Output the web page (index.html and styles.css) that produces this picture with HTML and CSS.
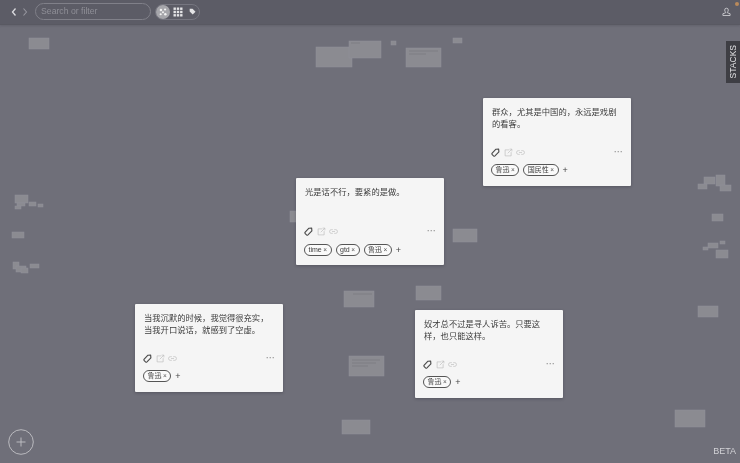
FILE: index.html
```html
<!DOCTYPE html>
<html lang="zh">
<head>
<meta charset="utf-8">
<title>Stacks</title>
<link rel="stylesheet" href="styles.css">
</head>
<body>
<svg width="0" height="0" class="defs">
  <defs>
    <symbol id="i-tag" viewBox="0 0 12 12"><path d="M6.600 1.600 10.200 1.500 10.500 5.200 5.300 10.600a1.400 1.400 0 0 1-1.900 0L1.600 8.700a1.400 1.400 0 0 1 0-1.900Z" fill="none" stroke="currentColor" stroke-width="1.500" stroke-linejoin="round"/></symbol>
    <symbol id="i-share" viewBox="0 0 12 12"><path d="M7 2.500H1.500V10.500H9.500V5.500M5 7 10.500 1.500M7.500 1.500H10.500V4.500" fill="none" stroke="currentColor" stroke-width=".9"/></symbol>
    <symbol id="i-link" viewBox="0 0 12 12"><path d="M5 3.500H3.200a2.500 2.500 0 0 0 0 5H5M7 3.500H8.800a2.500 2.500 0 0 1 0 5H7M4 6H8" fill="none" stroke="currentColor" stroke-width=".9"/></symbol>
  </defs>
</svg>
<header class="topbar">
  <div class="nav">
    <svg class="chev" viewBox="0 0 8 10"><path d="M5.500 1.500 2.500 5 5.500 8.500" fill="none" stroke="currentColor" stroke-width="1.300"/></svg>
    <svg class="chev chev-off" viewBox="0 0 8 10"><path d="M2.500 1.500 5.500 5 2.500 8.500" fill="none" stroke="currentColor" stroke-width="1.100"/></svg>
  </div>
  <div class="search">Search or filter</div>
  <div class="views">
    <span class="view view-on">
      <svg viewBox="0 0 12 12" class="view-icon"><g fill="#f2f2f2"><circle cx="3.500" cy="3.500" r="1.500"/><circle cx="8.500" cy="3" r="1.300"/><circle cx="6" cy="6.300" r="1.200"/><circle cx="3.200" cy="8.700" r="1.300"/><circle cx="8.800" cy="8.600" r="1.500"/></g></svg>
    </span>
    <span class="view">
      <svg viewBox="0 0 10 10" class="view-icon"><g fill="#e4e4e6"><rect x="0.500" y="0.500" width="2.400" height="2.400"/><rect x="3.800" y="0.500" width="2.400" height="2.400"/><rect x="7.100" y="0.500" width="2.400" height="2.400"/><rect x="0.500" y="3.800" width="2.400" height="2.400"/><rect x="3.800" y="3.800" width="2.400" height="2.400"/><rect x="7.100" y="3.800" width="2.400" height="2.400"/><rect x="0.500" y="7.100" width="2.400" height="2.400"/><rect x="3.800" y="7.100" width="2.400" height="2.400"/><rect x="7.100" y="7.100" width="2.400" height="2.400"/></g></svg>
    </span>
    <span class="view">
      <svg viewBox="0 0 10 10" class="view-icon view-icon-small"><path d="M1 1H5L9.300 5.300 5.300 9.300 1 5Z" fill="#e4e4e6"/></svg>
    </span>
  </div>
  <div class="account">
    <svg class="user" viewBox="0 0 10 10"><path d="M5 .8a2 2 0 0 1 2 2c0 1-.5 1.800-1 2.300v.8l3 1v2H1v-2l3-1v-.8c-.5-.5-1-1.300-1-2.300a2 2 0 0 1 2-2Z" fill="none" stroke="currentColor" stroke-width=".9"/></svg>
    <span class="notify"></span>
  </div>
</header>
<main class="canvas">
  <svg class="minimap" width="740" height="438" viewBox="0 25 740 438">
    <g class="mini">
      <rect x="29" y="38" width="20" height="11"/>
      <rect x="316" y="47" width="36" height="20"/>
      <rect x="349" y="41" width="32" height="17"/>
      <rect x="391" y="41" width="5" height="4"/>
      <rect x="406" y="48" width="35" height="19"/>
      <rect x="453" y="38" width="9" height="5"/>
      <rect x="15" y="195" width="13" height="8"/>
      <rect x="17" y="203" width="8" height="3"/>
      <rect x="15" y="206" width="6" height="3"/>
      <rect x="29" y="202" width="7" height="4"/>
      <rect x="38" y="204" width="5" height="3"/>
      <rect x="12" y="232" width="12" height="6"/>
      <rect x="13" y="262" width="6" height="7"/>
      <rect x="16" y="266" width="10" height="6"/>
      <rect x="21" y="268" width="7" height="5"/>
      <rect x="30" y="264" width="9" height="4"/>
      <rect x="704" y="177" width="11" height="7"/>
      <rect x="716" y="175" width="9" height="11"/>
      <rect x="720" y="185" width="11" height="6"/>
      <rect x="698" y="184" width="9" height="5"/>
      <rect x="712" y="214" width="11" height="7"/>
      <rect x="708" y="243" width="10" height="5"/>
      <rect x="703" y="247" width="5" height="3"/>
      <rect x="720" y="241" width="5" height="3"/>
      <rect x="716" y="250" width="12" height="8"/>
      <rect x="290" y="211" width="8" height="11"/>
      <rect x="453" y="229" width="24" height="13"/>
      <rect x="344" y="291" width="30" height="16"/>
      <rect x="416" y="286" width="25" height="14"/>
      <rect x="349" y="356" width="35" height="20"/>
      <rect x="342" y="420" width="28" height="14"/>
      <rect x="675" y="410" width="30" height="17"/>
      <rect x="698" y="306" width="20" height="11"/>
    </g>
    <g class="mini-lines">
      <path d="M353 294H372M352 360H380M352 363H376M352 366H368M409 51H438M409 54H426M351 43H360"/>
    </g>
  </svg>

  <article class="card card-a">
    <p class="note">光是话不行，要紧的是做。</p>
    <div class="tools">
      <svg class="tool tool-tag"><use href="#i-tag"/></svg>
      <svg class="tool"><use href="#i-share"/></svg>
      <svg class="tool"><use href="#i-link"/></svg>
      <span class="more">···</span>
    </div>
    <div class="tags">
      <span class="tag">time<i>×</i></span>
      <span class="tag">gtd<i>×</i></span>
      <span class="tag">鲁迅<i>×</i></span>
      <span class="add">+</span>
    </div>
  </article>

  <article class="card card-b">
    <p class="note">群众，尤其是中国的，永远是戏剧<br>的看客。</p>
    <div class="tools">
      <svg class="tool tool-tag"><use href="#i-tag"/></svg>
      <svg class="tool"><use href="#i-share"/></svg>
      <svg class="tool"><use href="#i-link"/></svg>
      <span class="more">···</span>
    </div>
    <div class="tags">
      <span class="tag">鲁迅<i>×</i></span>
      <span class="tag">国民性<i>×</i></span>
      <span class="add">+</span>
    </div>
  </article>

  <article class="card card-c">
    <p class="note">当我沉默的时候，我觉得很充实，<br>当我开口说话，就感到了空虚。</p>
    <div class="tools">
      <svg class="tool tool-tag"><use href="#i-tag"/></svg>
      <svg class="tool"><use href="#i-share"/></svg>
      <svg class="tool"><use href="#i-link"/></svg>
      <span class="more">···</span>
    </div>
    <div class="tags">
      <span class="tag">鲁迅<i>×</i></span>
      <span class="add">+</span>
    </div>
  </article>

  <article class="card card-d">
    <p class="note">奴才总不过是寻人诉苦。只要这<br>样，也只能这样。</p>
    <div class="tools">
      <svg class="tool tool-tag"><use href="#i-tag"/></svg>
      <svg class="tool"><use href="#i-share"/></svg>
      <svg class="tool"><use href="#i-link"/></svg>
      <span class="more">···</span>
    </div>
    <div class="tags">
      <span class="tag">鲁迅<i>×</i></span>
      <span class="add">+</span>
    </div>
  </article>

  <div class="stacks"><span>STACKS</span></div>
  <div class="new">
    <svg viewBox="0 0 26 26"><circle cx="13" cy="13" r="12.300" fill="none" stroke="currentColor" stroke-width=".9"/><path d="M13 8.500V17.500M8.500 13H17.500" fill="none" stroke="currentColor" stroke-width=".9"/></svg>
  </div>
  <div class="beta">BETA</div>
</main>
</body>
</html>
```

FILE: styles.css
```css
* { box-sizing: border-box; }
html, body { margin: 0; height: 100%; }
body {
  width: 740px;
  height: 463px;
  overflow: hidden;
  display: flex;
  flex-direction: column;
  background: #6f6f79;
  font-family: "Liberation Sans", "Noto Sans CJK SC", sans-serif;
}
.defs { position: absolute; }

.topbar {
  height: 25px;
  flex: none;
  display: flex;
  align-items: center;
  padding: 0 6px 1px 10px;
  background: #5c5c66;
  border-bottom: 1px solid #595962;
  box-shadow: 0 1px 2px rgba(60, 60, 70, .25);
  z-index: 2;
  filter: blur(.3px);
}
.nav { display: flex; gap: 3px; width: 25px; flex: none; }
.chev { width: 8px; height: 10px; color: #dcdce0; }
.chev-off { color: #96969e; }
.search {
  width: 116px;
  height: 17px;
  border: 1px solid #808089;
  border-radius: 9px;
  padding-left: 5px;
  font-size: 8.700px;
  line-height: 15px;
  color: #8f8f97;
}
.views {
  margin-left: 4px;
  width: 45px;
  height: 16px;
  border: 1px solid #767680;
  border-radius: 8px;
  display: flex;
  align-items: center;
}
.view {
  width: 15px;
  height: 14px;
  display: flex;
  align-items: center;
  justify-content: center;
  flex: none;
}
.view-on {
  width: 14px;
  height: 14px;
  border-radius: 50%;
  background: #a6a6ab;
}
.view-icon { width: 10px; height: 10px; display: block; }
.view-icon-small { width: 7px; height: 7px; }
.account {
  margin-left: auto;
  position: relative;
  width: 10px;
  height: 10px;
  margin-right: 2px;
}
.user { display: block; width: 9px; height: 10px; color: #d6d6da; }
.notify {
  position: absolute;
  right: -7px;
  top: -5px;
  width: 4px;
  height: 4px;
  border-radius: 50%;
  background: #b98a5c;
}

.canvas { position: relative; flex: 1; filter: blur(.3px); }
.minimap { position: absolute; left: 0; top: 0; display: block; }
.mini rect { fill: #8b8b91; stroke: #90909a; stroke-width: .5; }
.mini-lines path { fill: none; stroke: #787880; stroke-width: .7; }

.card {
  position: absolute;
  width: 148px;
  height: 88px;
  padding: 7px 8px 0 9px;
  background: #f5f5f5;
  border-radius: 1px;
  box-shadow: 0 1px 3px rgba(40, 40, 50, .35);
  display: flex;
  flex-direction: column;
}
.card-a { left: 296px; top: 153px; height: 87px; }
.card-a .tools { margin-top: 4px; }
.card-a .tags { margin-top: 7px; }
.card-b { left: 483px; top: 73px; }
.card-c { left: 135px; top: 279px; }
.card-d { left: 415px; top: 285px; }

.note {
  margin: 0;
  height: 36px;
  font-size: 8.300px;
  line-height: 12px;
  color: #3c3c3c;
  white-space: nowrap;
  font-family: "Noto Sans CJK SC", sans-serif;
}
.tools {
  margin-top: 5px;
  height: 12px;
  display: flex;
  align-items: center;
  gap: 3px;
  margin-left: -1px;
  color: #bdbdbd;
}
.tool { width: 9px; height: 9px; flex: none; margin-right: .5px; }
.tool-tag { color: #4b4b4b; }
.more {
  margin-left: auto;
  margin-right: 0;
  font-size: 9px;
  line-height: 12px;
  font-weight: bold;
  color: #a0a0a0;
}
.tags {
  margin-top: 6px;
  margin-left: -1px;
  display: flex;
  align-items: center;
  gap: 4px;
}
.tag {
  height: 12px;
  display: flex;
  align-items: center;
  padding: 0 3.500px;
  gap: 1.500px;
  border: 1px solid #555;
  border-radius: 6px;
  background: #fafafa;
  font-size: 7px;
  line-height: 10px;
  color: #3c3c3c;
}
.tag i { font-style: normal; font-size: 6.500px; color: #555; }
.add { font-size: 9px; line-height: 10px; color: #444; margin-left: 0; }

.stacks {
  position: absolute;
  right: 0;
  top: 16px;
  width: 14px;
  height: 42px;
  background: #3e3e44;
  display: flex;
  align-items: center;
  justify-content: center;
}
.stacks span {
  writing-mode: vertical-rl;
  transform: rotate(180deg);
  font-size: 8.500px;
  color: #e2e2e4;
}
.new {
  position: absolute;
  left: 8px;
  top: 404px;
  width: 26px;
  height: 26px;
  color: #c2c2c6;
}
.new svg { display: block; width: 26px; height: 26px; }
.beta {
  position: absolute;
  right: 4px;
  bottom: 6px;
  font-size: 9px;
  line-height: 11px;
  color: #d2d2d6;
}
```
